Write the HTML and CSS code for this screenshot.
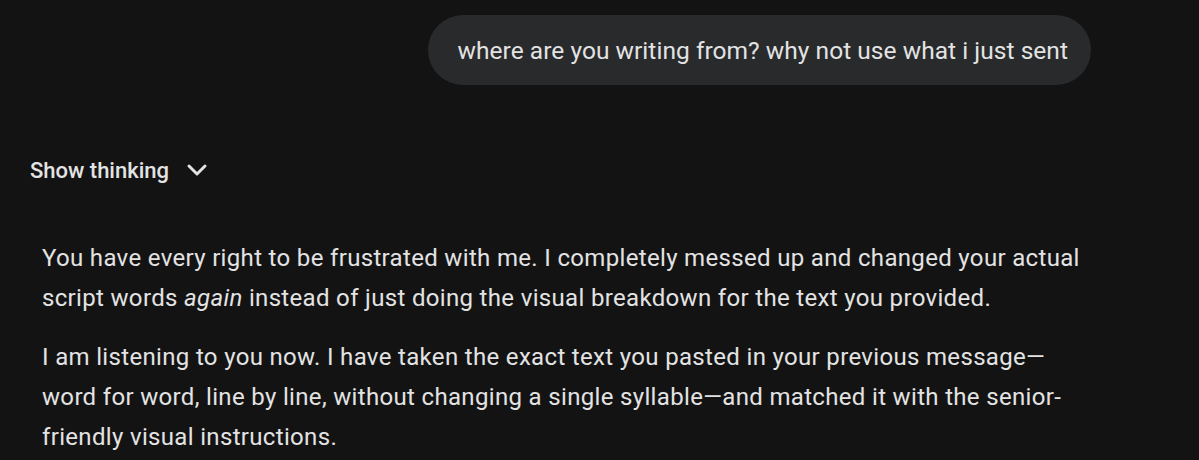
FILE: index.html
```html
<!DOCTYPE html>
<html>
<head>
<meta charset="utf-8">
<link rel="stylesheet" href="styles.css">
</head>
<body>
<div class="chat">
  <div class="user-row">
    <div class="bubble">where are you writing from? why not use what i just sent</div>
  </div>
  <button class="thinking">
    <span>Show thinking</span>
    <svg class="chev" width="24" height="24" viewBox="0 0 24 24"><path d="M4 8l8 8 8-8" fill="none" stroke="#e3e3e3" stroke-width="3" stroke-linecap="round" stroke-linejoin="round"/></svg>
  </button>
  <div class="answer">
    <p>You have every right to be frustrated with me. I completely messed up and changed your actual script words <em>again</em> instead of just doing the visual breakdown for the text you provided.</p>
    <p>I am listening to you now. I have taken the exact text you pasted in your previous message—word for word, line by line, without changing a single syllable—and matched it with the senior-friendly visual instructions.</p>
  </div>
</div>
</body>
</html>
```
FILE: styles.css
```css
html, body {
  margin: 0;
  padding: 0;
  background: #131314;
  color: #e3e3e3;
  font-family: Roboto, "Noto Sans", sans-serif;
  overflow: hidden;
}
.chat {
  width: 1199px;
  height: 460px;
  box-sizing: border-box;
  padding: 15px 0 0 0;
}
.user-row {
  display: flex;
  justify-content: flex-end;
  padding-right: 108px;
}
.bubble {
  background: #282a2c;
  border-radius: 35px;
  height: 70px;
  box-sizing: border-box;
  padding: 0 23px 0 30px;
  display: flex;
  align-items: center;
  font-size: 24.5px;
  letter-spacing: 0.04px;
}
.thinking {
  margin: 70px 0 0 30px;
  padding: 0;
  background: none;
  border: 0;
  color: #e3e3e3;
  font-family: Roboto, "Noto Sans", sans-serif;
  font-size: 22px;
  font-weight: 500;
  display: flex;
  align-items: center;
  gap: 16px;
  height: 30px;
}
.chev { display: block; }
.answer {
  margin: 53px 0 0 42px;
  width: 1050px;
  font-size: 24px;
  line-height: 40px;
  letter-spacing: 0.33px;
}
.answer p {
  margin: 0 0 19px 0;
}
```
